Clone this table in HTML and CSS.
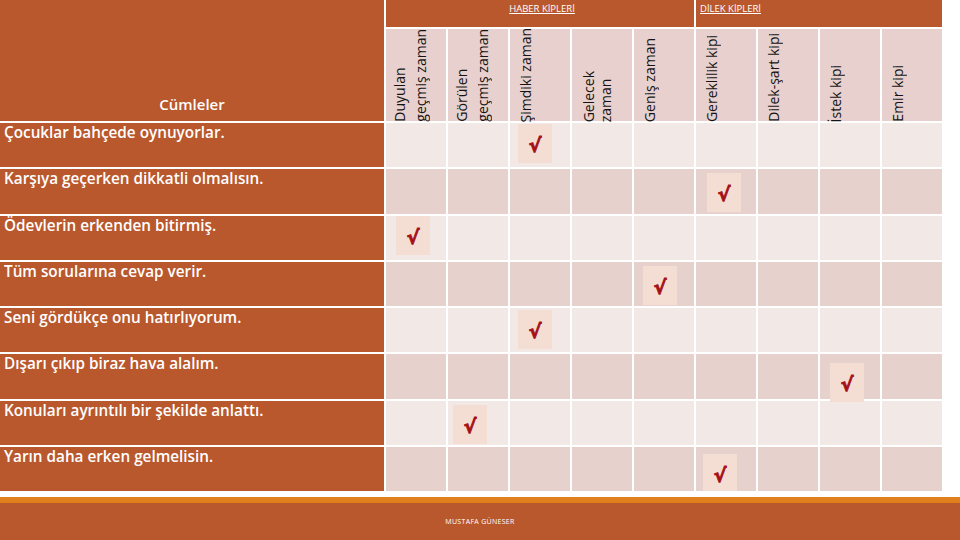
FILE: index.html
```html
<!DOCTYPE html>
<html lang="tr">
<head>
<meta charset="utf-8">
<title>Kipler</title>
<link rel="stylesheet" href="styles.css">
</head>
<body>
<div class="sheet">
  <div class="table">
    <div class="cell head-main">Cümleler</div>
    <div class="cell group haber"><span>HABER KİPLERİ</span></div>
    <div class="cell group dilek"><span>DİLEK KİPLERİ</span></div>

    <div class="cell sub tight"><div class="vtext wide">Duyulan<br>geçmiş zaman</div></div>
    <div class="cell sub tight"><div class="vtext wide">Görülen<br>geçmiş zaman</div></div>
    <div class="cell sub"><div class="vtext">Şimdiki zaman</div></div>
    <div class="cell sub gel"><div class="vtext narrow">Gelecek<br>zaman</div></div>
    <div class="cell sub"><div class="vtext">Geniş zaman</div></div>
    <div class="cell sub"><div class="vtext">Gereklilik kipi</div></div>
    <div class="cell sub"><div class="vtext">Dilek-şart kipi</div></div>
    <div class="cell sub"><div class="vtext">İstek kipi</div></div>
    <div class="cell sub"><div class="vtext">Emir kipi</div></div>

    <!-- row 1 -->
    <div class="cell sentence">Çocuklar bahçede oynuyorlar.</div>
    <div class="cell light"></div><div class="cell light"></div>
    <div class="cell light"><span class="check" style="--x:8px;--y:1px">√</span></div>
    <div class="cell light"></div><div class="cell light"></div><div class="cell light"></div>
    <div class="cell light"></div><div class="cell light"></div><div class="cell light"></div>

    <!-- row 2 -->
    <div class="cell sentence">Karşıya geçerken dikkatli olmalısın.</div>
    <div class="cell dark"></div><div class="cell dark"></div><div class="cell dark"></div>
    <div class="cell dark"></div><div class="cell dark"></div>
    <div class="cell dark"><span class="check" style="--x:11px;--y:4px">√</span></div>
    <div class="cell dark"></div><div class="cell dark"></div><div class="cell dark"></div>

    <!-- row 3 -->
    <div class="cell sentence">Ödevlerin erkenden bitirmiş.</div>
    <div class="cell light"><span class="check" style="--x:10px;--y:0px">√</span></div>
    <div class="cell light"></div><div class="cell light"></div><div class="cell light"></div>
    <div class="cell light"></div><div class="cell light"></div><div class="cell light"></div>
    <div class="cell light"></div><div class="cell light"></div>

    <!-- row 4 -->
    <div class="cell sentence">Tüm sorularına cevap verir.</div>
    <div class="cell dark"></div><div class="cell dark"></div><div class="cell dark"></div>
    <div class="cell dark"></div>
    <div class="cell dark"><span class="check" style="--x:9px;--y:4px">√</span></div>
    <div class="cell dark"></div><div class="cell dark"></div><div class="cell dark"></div>
    <div class="cell dark"></div>

    <!-- row 5 -->
    <div class="cell sentence">Seni gördükçe onu hatırlıyorum.</div>
    <div class="cell light"></div><div class="cell light"></div>
    <div class="cell light"><span class="check" style="--x:8px;--y:2px">√</span></div>
    <div class="cell light"></div><div class="cell light"></div><div class="cell light"></div>
    <div class="cell light"></div><div class="cell light"></div><div class="cell light"></div>

    <!-- row 6 -->
    <div class="cell sentence">Dışarı çıkıp biraz hava alalım.</div>
    <div class="cell dark"></div><div class="cell dark"></div><div class="cell dark"></div>
    <div class="cell dark"></div><div class="cell dark"></div><div class="cell dark"></div>
    <div class="cell dark"></div>
    <div class="cell dark"><span class="check" style="--x:10px;--y:9px">√</span></div>
    <div class="cell dark"></div>

    <!-- row 7 -->
    <div class="cell sentence">Konuları ayrıntılı bir şekilde anlattı.</div>
    <div class="cell light"></div>
    <div class="cell light"><span class="check" style="--x:5px;--y:4px">√</span></div>
    <div class="cell light"></div><div class="cell light"></div><div class="cell light"></div>
    <div class="cell light"></div><div class="cell light"></div><div class="cell light"></div>
    <div class="cell light"></div>

    <!-- row 8 -->
    <div class="cell sentence">Yarın daha erken gelmelisin.</div>
    <div class="cell dark"></div><div class="cell dark"></div><div class="cell dark"></div>
    <div class="cell dark"></div><div class="cell dark"></div>
    <div class="cell dark clip"><span class="check" style="--x:7px;--y:7px">√</span></div>
    <div class="cell dark"></div><div class="cell dark"></div><div class="cell dark"></div>
  </div>

  <footer class="footer">
    <span class="author">MUSTAFA GÜNESER</span>
  </footer>
</div>
</body>
</html>
```

FILE: styles.css
```css
html, body {
  margin: 0;
  padding: 0;
  background: #ffffff;
}

body {
  width: 960px;
  height: 540px;
  overflow: hidden;
  font-family: "Open Sans", "Noto Sans", "DejaVu Sans", sans-serif;
}

.sheet {
  display: flex;
  flex-direction: column;
  height: 540px;
}

.table {
  display: grid;
  grid-template-columns: 384px repeat(9, 60px);
  grid-template-rows: 27px 92px repeat(8, 44.25px);
  gap: 2px;
  width: 942px;
}

.cell {
  position: relative;
  box-sizing: border-box;
}

.head-main {
  grid-row: 1 / 3;
  background: #b9582d;
  color: #ffffff;
  display: flex;
  align-items: flex-end;
  justify-content: center;
  padding-bottom: 7px;
  font-size: 15px;
  font-weight: 600;
}

.group {
  background: #b9582d;
  color: #ffffff;
  font-size: 9.5px;
  line-height: 14px;
  padding-top: 2px;
}

.group span {
  text-decoration: underline;
}

.haber {
  grid-column: 2 / 7;
  text-align: center;
  padding-left: 4px;
}

.dilek {
  grid-column: 7 / 11;
  padding-left: 4px;
}

.sub {
  background: #e7d0cd;
  display: flex;
  align-items: flex-end;
  justify-content: flex-start;
  padding-left: 6px;
  padding-bottom: 0;
  overflow: visible;
}

.sub.tight {
  padding-left: 3px;
}

.sub.gel {
  padding-left: 8px;
}

.vtext {
  writing-mode: vertical-rl;
  transform: rotate(180deg);
  font-size: 14px;
  font-weight: 500;
  line-height: 20px;
  color: #141414;
  white-space: nowrap;
  margin-bottom: -1px;
}

.vtext.wide {
  line-height: 21px;
}

.vtext.narrow {
  line-height: 17px;
}

.sentence {
  background: #b9582d;
  color: #ffffff;
  font-size: 15.3px;
  font-weight: 600;
  line-height: 18px;
  padding: 0 4px;
  white-space: nowrap;
}

.light {
  background: #f2e9e7;
}

.dark {
  background: #e7d1cd;
}

.clip {
  overflow: hidden;
}

.check {
  position: absolute;
  left: var(--x);
  top: var(--y);
  width: 34px;
  height: 39px;
  background: #f4ded4;
  color: #a50f16;
  font-family: "DejaVu Sans", sans-serif;
  font-weight: bold;
  font-size: 19px;
  -webkit-text-stroke: 0.9px #a50f16;
  display: flex;
  align-items: center;
  justify-content: center;
  padding-top: 3px;
  box-sizing: border-box;
  z-index: 1;
}

.footer {
  margin-top: 6px;
  border-top: 6px solid #e0801c;
  background: #b9582d;
  flex: 1;
  display: flex;
  align-items: center;
  justify-content: center;
}

.author {
  color: #ffffff;
  font-size: 7px;
  letter-spacing: 0.3px;
  margin-top: -1px;
}
```
